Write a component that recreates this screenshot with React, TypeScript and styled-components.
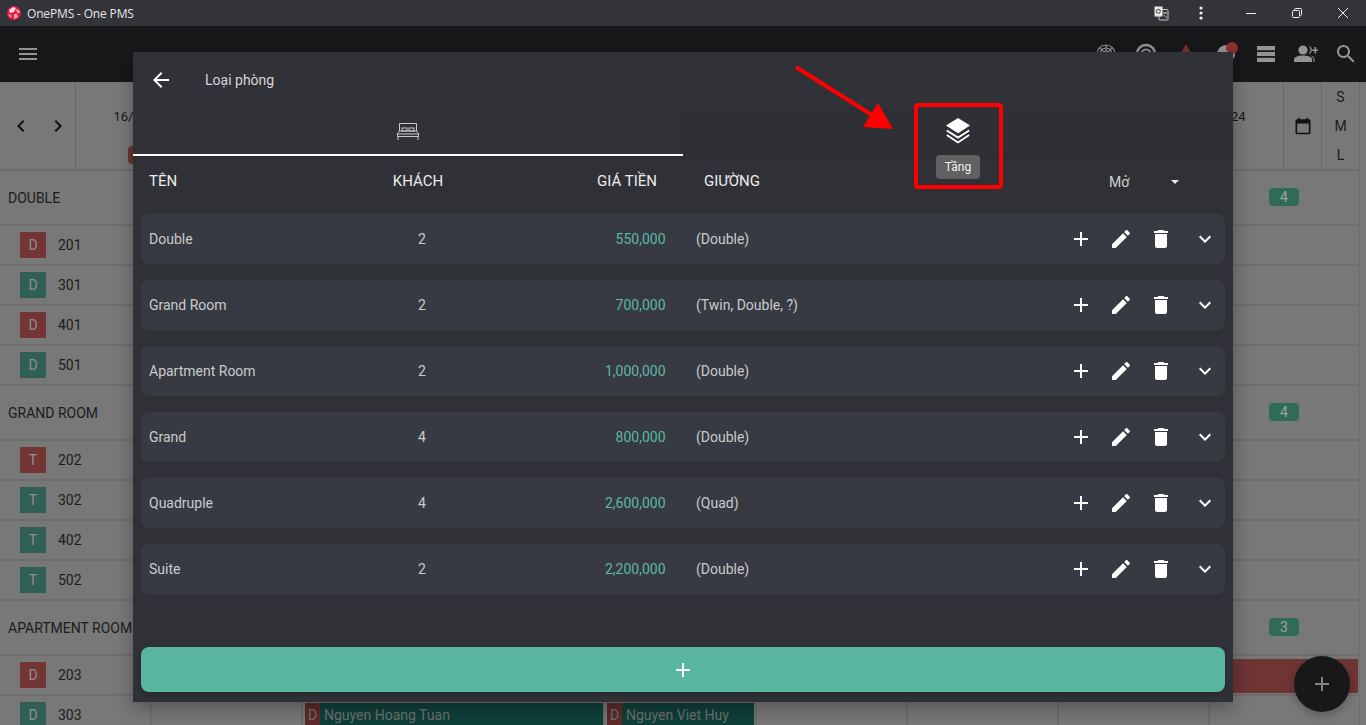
import React from "react";
import styled, { createGlobalStyle } from "styled-components";

const Global = createGlobalStyle`
  html, body { margin: 0; padding: 0; height: 100%; overflow: hidden; background: #787878; }
  #root { height: 100%; }
  * { box-sizing: border-box; }
  body { font-family: Roboto, "Liberation Sans", sans-serif; }
`;

const Page = styled.div`
  position: relative;
  width: 1366px;
  height: 725px;
  overflow: hidden;
  display: flex;
  flex-direction: column;
  background: #787878;
`;

/* window title bar */
const TitleBar = styled.div`
  height: 26px;
  flex: none;
  display: flex;
  align-items: center;
  background: #32343a;
  color: #e6e6e6;
  font: 12px "Open Sans", "Liberation Sans", sans-serif;
`;
const AppTitle = styled.span`
  margin-left: 6px;
  flex: 1;
  letter-spacing: -0.16px;
`;
const Logo = styled.svg`
  margin-left: 7px;
  width: 14px;
  height: 14px;
`;
const WinBtn = styled.div<{ $w: number; $mr?: number }>`
  width: ${(p) => p.$w}px;
  margin-right: ${(p) => p.$mr ?? 0}px;
  height: 26px;
  display: flex;
  align-items: center;
  justify-content: center;
`;

/* application bar */
const AppBar = styled.div`
  height: 56px;
  flex: none;
  display: flex;
  align-items: center;
  padding: 0 8px 0 16px;
  background: #18181a;
  color: #949494;
`;
const Spacer = styled.div`
  flex: 1;
`;
const BarIcons = styled.div`
  display: flex;
  gap: 16px;
`;
const Ico = styled.svg<{ $s?: number; $c?: string }>`
  width: ${(p) => p.$s ?? 24}px;
  height: ${(p) => p.$s ?? 24}px;
  fill: ${(p) => p.$c ?? "currentColor"};
  display: block;
  flex: none;
`;

/* scheduler behind the dialog */
const HeaderRow = styled.div`
  height: 89px;
  flex: none;
  display: flex;
  width: 1360px;
  border-bottom: 2px solid #6c6c6c;
  color: #161616;
  font-size: 13px;
`;
const NavCell = styled.div`
  width: 76px;
  flex: none;
  display: flex;
  align-items: center;
  gap: 13px;
  padding: 0 0 0 9px;
  border-right: 1px solid #666;
`;
const DateCell = styled.div`
  flex: 1;
  display: flex;
  flex-direction: column;
  align-items: center;
  padding-top: 27px;
  gap: 21px;
`;
const DateLabel = styled.div<{ $align: string }>`
  width: 76px;
  text-align: ${(p) => p.$align};
  line-height: 16px;
`;
const DayChip = styled.div`
  width: 46px;
  height: 18px;
  border-radius: 4px;
  background: #6e3533;
`;
const CalCell = styled.div`
  width: 38px;
  flex: none;
  display: flex;
  align-items: center;
  justify-content: center;
  border-left: 1px solid #666;
`;
const SizeCell = styled.div`
  width: 39px;
  flex: none;
  display: flex;
  flex-direction: column;
  align-items: center;
  justify-content: space-between;
  padding: 6px 0 5px;
  border-left: 1px solid #666;
  border-right: 1px solid #6c6c6c;
  font-size: 14px;
  line-height: 18px;
  color: #1c1c1c;
`;
const GroupRow = styled.div`
  height: 55px;
  flex: none;
  width: 1360px;
  display: flex;
  align-items: center;
  justify-content: space-between;
  padding: 0 60px 0 8px;
  border-bottom: 2px solid #6e6e6e;
  border-right: 1px solid #6e6e6e;
  font-size: 14px;
  color: #1c1c1c;
`;
const CountBadge = styled.div`
  width: 30px;
  height: 18px;
  margin-bottom: 2px;
  border-radius: 4px;
  background: #306b5a;
  color: #a0a0a0;
  font-size: 14px;
  display: flex;
  align-items: center;
  justify-content: center;
`;
const RoomRow = styled.div`
  position: relative;
  height: 40px;
  flex: none;
  width: 1360px;
  display: flex;
  align-items: center;
  border-bottom: 2px solid #6e6e6e;
  border-right: 1px solid #6e6e6e;
`;
const RoomName = styled.div`
  width: 150px;
  flex: none;
  display: flex;
  align-items: center;
  gap: 12px;
  padding-left: 20px;
  font-size: 14px;
  color: #1c1c1c;
`;
const RoomChip = styled.div<{ $red: boolean }>`
  width: 26px;
  height: 26px;
  background: ${(p) => (p.$red ? "#733634" : "#305f54")};
  color: #8f8f8f;
  display: flex;
  align-items: center;
  justify-content: center;
  font-size: 14px;
`;
const DayLines = styled.div`
  flex: 1;
  align-self: stretch;
  display: flex;
`;
const DayLine = styled.div`
  flex: 1;
  border-left: 2px solid #6e6e6e;
`;
const Overstay = styled.div`
  position: absolute;
  left: 1150px;
  right: 1px;
  top: 3px;
  height: 34px;
  background: #6e3533;
`;
const Booking = styled.div<{ $w: number; $x: number }>`
  position: absolute;
  left: ${(p) => p.$x}px;
  width: ${(p) => p.$w}px;
  top: 7px;
  height: 30px;
  display: flex;
  background: #0f3f3a;
  color: #6f6f6f;
  font-size: 14px;
  line-height: 24px;
`;
const BookingType = styled.span`
  width: 15px;
  background: #5e2b2a;
  text-align: center;
  margin-right: 4px;
`;
const Fab = styled.div`
  position: absolute;
  left: 1294px;
  top: 656px;
  width: 56px;
  height: 56px;
  border-radius: 50%;
  background: #18181a;
  color: #858585;
  display: flex;
  align-items: center;
  justify-content: center;
  box-shadow: 0 3px 8px rgba(0, 0, 0, 0.25);
`;

/* dialog */
const Dialog = styled.div`
  position: absolute;
  left: 133px;
  top: 52px;
  width: 1100px;
  height: 650px;
  display: flex;
  flex-direction: column;
  background: #303136;
  box-shadow: 0 6px 18px rgba(0, 0, 0, 0.3);
  color: #c9cacc;
  font-size: 14px;
`;
const DialogHeader = styled.div`
  height: 56px;
  flex: none;
  display: flex;
  align-items: center;
  padding-left: 16px;
  gap: 32px;
  color: #fff;
  background: #313238;
`;
const DialogTitle = styled.span`
  color: #d4d5d7;
`;
const Tabs = styled.div`
  height: 48px;
  flex: none;
  display: flex;
  box-shadow: 0 2px 3px rgba(0, 0, 0, 0.12);
`;
const Tab = styled.div<{ $active?: boolean }>`
  position: relative;
  flex: 1;
  display: flex;
  align-items: center;
  justify-content: center;
  background: ${(p) => (p.$active ? "#313238" : "#2f3035")};
  border-bottom: 2px solid ${(p) => (p.$active ? "#fff" : "transparent")};
`;
const Tooltip = styled.div`
  position: absolute;
  left: 50%;
  top: 47px;
  transform: translateX(-50%);
  width: 44px;
  height: 24px;
  border-radius: 4px;
  background: #616161;
  color: #f2f2f2;
  font-size: 12px;
  display: flex;
  align-items: center;
  justify-content: center;
`;
const TableHead = styled.div`
  height: 58px;
  flex: none;
  display: grid;
  grid-template-columns: 229px 80px 199px 452px 62px 1fr;
  align-items: center;
  padding: 0 0 8px 16px;
  color: #ececec;
  font-size: 15px;
`;
const HeadCell = styled.div<{ $align?: string; $ml?: number }>`
  text-align: ${(p) => p.$align ?? "left"};
  margin-left: ${(p) => p.$ml ?? 0}px;
`;
const HeadFilter = styled.div`
  font-size: 14px;
  color: #cfd0d2;
  padding-top: 2px;
`;
const Caret = styled.div`
  width: 0;
  height: 0;
  margin-top: 1px;
  border-left: 4px solid transparent;
  border-right: 4px solid transparent;
  border-top: 4px solid #e8e8e8;
`;
const List = styled.div`
  flex: 1;
  display: flex;
  flex-direction: column;
  gap: 16px;
  padding: 0 8px;
`;
const Row = styled.div`
  height: 50px;
  flex: none;
  display: grid;
  grid-template-columns: 233px 80px 203.5px 1fr auto;
  align-items: center;
  padding: 0 8px;
  border-radius: 8px;
  background: #373a42;
`;
const Guests = styled.div`
  text-align: center;
`;
const Price = styled.div`
  text-align: right;
  color: #5cb8a3;
`;
const Beds = styled.div`
  margin-left: 30.5px;
`;
const Actions = styled.div`
  display: flex;
  gap: 16px;
  color: #fff;
`;
const Expand = styled.div`
  margin-left: 4px;
`;
const AddBar = styled.div`
  height: 45px;
  flex: none;
  margin: 0 8px 10px;
  border-radius: 8px;
  background: #57b5a0;
  display: flex;
  align-items: center;
  justify-content: center;
  color: #fff;
  box-shadow: 0 2px 4px rgba(0, 0, 0, 0.2);
`;
const Annotation = styled.svg`
  position: absolute;
  left: 0;
  top: 0;
  width: 1366px;
  height: 725px;
  pointer-events: none;
`;

const P = {
  menu: "M3 18h18v-2H3v2zm0-5h18v-2H3v2zm0-7v2h18V6H3z",
  search:
    "M15.5 14h-.79l-.28-.27C15.41 12.59 16 11.11 16 9.5 16 5.91 13.09 3 9.5 3S3 5.91 3 9.5 5.91 16 9.5 16c1.61 0 3.09-.59 4.23-1.57l.27.28v.79l5 4.99L20.49 19l-4.99-5zm-6 0C7.01 14 5 11.99 5 9.5S7.01 5 9.5 5 14 7.01 14 9.5 11.99 14 9.5 14z",
  add: "M19 13h-6v6h-2v-6H5v-2h6V5h2v6h6v2z",
  edit: "M3 17.25V21h3.75L17.81 9.94l-3.75-3.75L3 17.25zM20.71 7.04c.39-.39.39-1.02 0-1.41l-2.34-2.34c-.39-.39-1.02-.39-1.41 0l-1.83 1.83 3.75 3.75 1.83-1.83z",
  del: "M6 19c0 1.1.9 2 2 2h8c1.1 0 2-.9 2-2V7H6v12zM19 4h-3.5l-1-1h-5l-1 1H5v2h14V4z",
  more: "M16.59 8.59L12 13.17 7.41 8.59 6 10l6 6 6-6z",
  back: "M20 11H7.83l5.59-5.59L12 4l-8 8 8 8 1.41-1.41L7.83 13H20v-2z",
  left: "M15.41 7.41L14 6l-6 6 6 6 1.41-1.41L10.83 12z",
  right: "M10 6L8.59 7.41 13.17 12l-4.58 4.59L10 18l6-6z",
  cal: "M19 4h-1V2h-2v2H8V2H6v2H5c-1.1 0-2 .9-2 2v14c0 1.1.9 2 2 2h14c1.1 0 2-.9 2-2V6c0-1.1-.9-2-2-2zm0 16H5V9h14v11z",
};

const I = ({ d, s, c }: { d: string; s?: number; c?: string }) => (
  <Ico viewBox="0 0 24 24" $s={s} $c={c}>
    <path d={d} />
  </Ico>
);

const rooms = [
  { name: "Double", guests: 2, price: "550,000", beds: "(Double)" },
  { name: "Grand Room", guests: 2, price: "700,000", beds: "(Twin, Double, ?)" },
  { name: "Apartment Room", guests: 2, price: "1,000,000", beds: "(Double)" },
  { name: "Grand", guests: 4, price: "800,000", beds: "(Double)" },
  { name: "Quadruple", guests: 4, price: "2,600,000", beds: "(Quad)" },
  { name: "Suite", guests: 2, price: "2,200,000", beds: "(Double)" },
];

const groups = [
  { name: "DOUBLE", n: 4, t: "D", items: [["201", 1], ["301", 0], ["401", 1], ["501", 0]] },
  { name: "GRAND ROOM", n: 4, t: "T", items: [["202", 1], ["302", 0], ["402", 0], ["502", 0]] },
] as const;

export default function App() {
  return (
    <Page>
      <Global />
      <TitleBar>
        <Logo viewBox="0 0 14 14">
          <circle cx="7" cy="7" r="7" fill="#e4193f" />
          <path d="M2 4l4-3 3 1-2 4-4 1z" fill="#fbdbe2" />
          <path d="M9 3l3 1 1 3-3 0zM7 8l3 0 1 3-4 2z" fill="#f7a9b8" />
          <path d="M1 8.5l3 0 1 3-2 0z" fill="#f58aa0" />
        </Logo>
        <AppTitle>OnePMS - One PMS</AppTitle>
        <WinBtn $w={40}>
          <svg width="15" height="15" viewBox="0 0 15 15">
            <rect x="5" y="3.5" width="9" height="10.5" rx="1" fill="#32343a" stroke="#c8c8c8" />
            <rect x="0.5" y="0.5" width="8" height="10" fill="#e8e8e8" />
            <circle cx="4.3" cy="5.3" r="2" fill="none" stroke="#444" />
            <path d="M9 7h4M11 6v1M10 8.5c.6 1.6 1.6 2.6 3 3" stroke="#c8c8c8" fill="none" />
          </svg>
        </WinBtn>
        <WinBtn $w={40} $mr={7}>
          <svg width="4" height="14" viewBox="0 0 4 14" fill="#eee">
            <circle cx="2" cy="2" r="1.6" />
            <circle cx="2" cy="7" r="1.6" />
            <circle cx="2" cy="12" r="1.6" />
          </svg>
        </WinBtn>
        <WinBtn $w={46}>
          <svg width="10" height="10" viewBox="0 0 10 10" stroke="#eee" fill="none">
            <path d="M0 5.5h10" />
          </svg>
        </WinBtn>
        <WinBtn $w={46}>
          <svg width="10" height="10" viewBox="0 0 10 10" stroke="#eee" fill="none">
            <rect x="0.5" y="2.5" width="7" height="7" rx="1" />
            <path d="M2.5 2.5V1.5a1 1 0 0 1 1-1h5a1 1 0 0 1 1 1v5a1 1 0 0 1-1 1h-1" />
          </svg>
        </WinBtn>
        <WinBtn $w={46}>
          <svg width="10" height="10" viewBox="0 0 10 10" stroke="#eee" fill="none">
            <path d="M0 0l10 10M10 0L0 10" />
          </svg>
        </WinBtn>
      </TitleBar>

      <AppBar>
        <I d={P.menu} />
        <Spacer />
        <BarIcons>
          <Ico viewBox="0 0 24 24">
            <g fill="none" stroke="currentColor" strokeWidth="1.2">
              <circle cx="12" cy="12" r="9" />
              <circle cx="12" cy="12" r="6" />
              <circle cx="12" cy="12" r="3" />
              <path d="M12 3v18M3 12h18M5.6 5.6l12.8 12.8M18.4 5.6L5.6 18.4" />
            </g>
          </Ico>
          <Ico viewBox="0 0 24 24">
            <g fill="none" stroke="currentColor">
              <circle cx="12" cy="12" r="9" strokeWidth="2.6" />
              <circle cx="12" cy="12" r="4.5" strokeWidth="2.2" />
            </g>
          </Ico>
          <Ico viewBox="0 0 24 24" $c="#7a2f30">
            <path d="M12 2L22 20H2z" />
          </Ico>
          <Ico viewBox="0 0 24 24">
            <circle cx="12" cy="12" r="9" />
            <circle cx="18" cy="6" r="6" fill="#8c3035" />
          </Ico>
          <Ico viewBox="0 0 24 24">
            <path d="M3 4h18v4.2H3zM3 9.9h18v4.2H3zM3 15.8h18V20H3z" />
          </Ico>
          <Ico viewBox="0 0 24 24">
            <circle cx="9" cy="8" r="4.6" />
            <path d="M0 20v-2.5C0 14.5 5 13.5 9 13.5s9 1 9 4V20z" />
            <path d="M14.5 3.6a4.6 4.6 0 0 1 0 8.8A6 6 0 0 0 14.5 3.6zM16 13.6c3 .5 4.5 1.8 4.5 3.9V20H19.5v-2.5c0-1.6-1.3-3-3.5-3.9zM20.5 5h1.6v2.4h2.4V9h-2.4v2.4h-1.6V9h-2.4V7.4h2.4z" />
          </Ico>
          <I d={P.search} />
        </BarIcons>
      </AppBar>

      <HeaderRow>
        <NavCell>
          <I d={P.left} c="#111" />
          <I d={P.right} c="#111" />
        </NavCell>
        <DateCell>
          <DateLabel $align="left">16/01/2024</DateLabel>
          <DayChip />
        </DateCell>
        {Array.from({ length: 6 }).map((_, i) => (
          <DateCell key={i} />
        ))}
        <DateCell>
          <DateLabel $align="right">22/01/2024</DateLabel>
        </DateCell>
        <CalCell>
          <I d={P.cal} s={20} c="#111" />
        </CalCell>
        <SizeCell>
          <span>S</span>
          <span>M</span>
          <span>L</span>
        </SizeCell>
      </HeaderRow>

      {groups.map((g) => (
        <React.Fragment key={g.name}>
          <GroupRow>
            {g.name}
            <CountBadge>{g.n}</CountBadge>
          </GroupRow>
          {g.items.map(([no, red]) => (
            <RoomRow key={no}>
              <RoomName>
                <RoomChip $red={!!red}>{g.t}</RoomChip>
                {no}
              </RoomName>
            </RoomRow>
          ))}
        </React.Fragment>
      ))}
      <GroupRow>
        APARTMENT ROOM
        <CountBadge>3</CountBadge>
      </GroupRow>
      <RoomRow>
        <RoomName>
          <RoomChip $red>D</RoomChip>203
        </RoomName>
        <Overstay />
      </RoomRow>
      <RoomRow>
        <RoomName>
          <RoomChip $red={false}>D</RoomChip>303
        </RoomName>
        <DayLines>
          {Array.from({ length: 8 }).map((_, i) => (
            <DayLine key={i} />
          ))}
        </DayLines>
        <Booking $x={305} $w={298}>
          <BookingType>D</BookingType>Nguyen Hoang Tuan
        </Booking>
        <Booking $x={607} $w={147}>
          <BookingType>D</BookingType>Nguyen Viet Huy
        </Booking>
      </RoomRow>

      <Fab>
        <I d={P.add} />
      </Fab>

      <Dialog>
        <DialogHeader>
          <I d={P.back} />
          <DialogTitle>Loại phòng</DialogTitle>
        </DialogHeader>
        <Tabs>
          <Tab $active>
            <svg width="22" height="17" viewBox="0 0 22 17" fill="none" stroke="#c8c8c8" strokeWidth="1">
              <path d="M2.5 8V.5h17V8" />
              <rect x="5" y="5" width="5" height="3" />
              <rect x="12" y="5" width="5" height="3" />
              <path d="M2.5 8h17l2 2.5v3H.5v-3zM.5 11h21M1 13.5V17M21 13.5V17" />
            </svg>
          </Tab>
          <Tab>
            <svg width="24" height="26" viewBox="0 0 24 26" fill="#fff">
              <path d="M12 0l12 7.6L12 15.2 0 7.6z" />
              <path d="M.8 12.4L12 19.6l11.2-7.2" fill="none" stroke="#fff" strokeWidth="1.8" />
              <path d="M.8 17L12 24.4 23.2 17" fill="none" stroke="#fff" strokeWidth="1.8" />
            </svg>
            <Tooltip>Tầng</Tooltip>
          </Tab>
        </Tabs>
        <TableHead>
          <HeadCell>TÊN</HeadCell>
          <HeadCell $align="center">KHÁCH</HeadCell>
          <HeadCell $align="right">GIÁ TIỀN</HeadCell>
          <HeadCell $ml={47}>GIƯỜNG</HeadCell>
          <HeadFilter>Mở</HeadFilter>
          <Caret />
        </TableHead>
        <List>
          {rooms.map((r) => (
            <Row key={r.name}>
              <div>{r.name}</div>
              <Guests>{r.guests}</Guests>
              <Price>{r.price}</Price>
              <Beds>{r.beds}</Beds>
              <Actions>
                <I d={P.add} />
                <I d={P.edit} />
                <I d={P.del} />
                <Expand>
                  <I d={P.more} />
                </Expand>
              </Actions>
            </Row>
          ))}
        </List>
        <AddBar>
          <I d={P.add} />
        </AddBar>
      </Dialog>

      <Annotation viewBox="0 0 1366 725">
        <path d="M797.5 68L872 115" stroke="#fe0000" strokeWidth="4" strokeLinecap="round" fill="none" />
        <polygon points="878,103 893,129 863,127" fill="#fe0000" />
        <rect x="916" y="105" width="85" height="82" rx="2" fill="none" stroke="#fe0000" strokeWidth="4" />
      </Annotation>
    </Page>
  );
}
